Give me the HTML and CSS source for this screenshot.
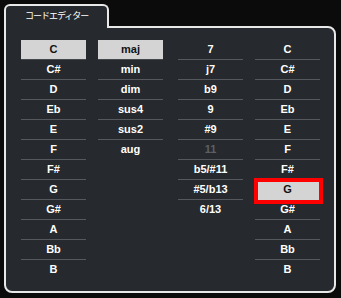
FILE: index.html
```html
<!DOCTYPE html>
<html>
<head>
  <title>コードエディター</title>
  <link rel="stylesheet" href="styles.css">
</head>
<body>
  <div class="tab">コードエディター</div>
  <div class="panel">
    <ul class="col">
      <li class="sel">C</li>
      <li>C#</li>
      <li>D</li>
      <li>Eb</li>
      <li>E</li>
      <li>F</li>
      <li>F#</li>
      <li>G</li>
      <li>G#</li>
      <li>A</li>
      <li>Bb</li>
      <li>B</li>
    </ul>
    <ul class="col">
      <li class="sel">maj</li>
      <li>min</li>
      <li>dim</li>
      <li>sus4</li>
      <li>sus2</li>
      <li>aug</li>
    </ul>
    <ul class="col tensions">
      <li>7</li>
      <li>j7</li>
      <li>b9</li>
      <li>9</li>
      <li>#9</li>
      <li class="off">11</li>
      <li>b5/#11</li>
      <li>#5/b13</li>
      <li>6/13</li>
    </ul>
    <ul class="col">
      <li>C</li>
      <li>C#</li>
      <li>D</li>
      <li>Eb</li>
      <li>E</li>
      <li>F</li>
      <li>F#</li>
      <li class="mark"><span>G</span></li>
      <li>G#</li>
      <li>A</li>
      <li>Bb</li>
      <li>B</li>
    </ul>
  </div>
</body>
</html>
```

FILE: styles.css
```css
body {
  margin: 0;
  padding: 4px 5px 0 4px;
  background-color: #0b0b0b;
  font-family: "Liberation Sans", Arial, sans-serif;
}
.tab {
  position: relative;
  z-index: 1;
  box-sizing: border-box;
  width: 105px;
  height: 24px;
  margin-bottom: -2px;
  padding-left: 19px;
  border: 2px solid #e8e8e8;
  border-bottom: none;
  border-radius: 6px 6px 0 0;
  background-color: #26292d;
  color: #fff;
  font-family: "Noto Sans CJK JP", sans-serif;
  font-size: 9px;
  letter-spacing: -1px;
  line-height: 20px;
}
.panel {
  display: flex;
  gap: 12px;
  box-sizing: border-box;
  height: 267px;
  padding: 12px 0 0 15px;
  border: 2px solid #e8e8e8;
  border-radius: 0 8px 8px 8px;
  background-color: #26292d;
}
.col {
  width: 65px;
  margin: 0;
  padding: 0;
  list-style: none;
}
.tensions {
  margin-left: 3px;
}
.col li {
  box-sizing: border-box;
  height: 20px;
  border-bottom: 1px solid #55595d;
  color: #fff;
  font-size: 11px;
  font-weight: bold;
  line-height: 19px;
  text-align: center;
}
.col li:last-child {
  border-bottom: none;
}
.col li.sel {
  background-color: #d4d4d4;
  color: #111;
  border-bottom-color: #45484b;
}
.col li.off {
  color: #5c6066;
}
.col li.mark {
  position: relative;
  color: #111;
}
.col li.mark::before {
  content: "";
  position: absolute;
  top: 2px;
  right: 1px;
  bottom: -1px;
  left: 3px;
  background-color: #d4d4d4;
  outline: 4px solid #f00;
}
.col li.mark span {
  position: relative;
}
```
